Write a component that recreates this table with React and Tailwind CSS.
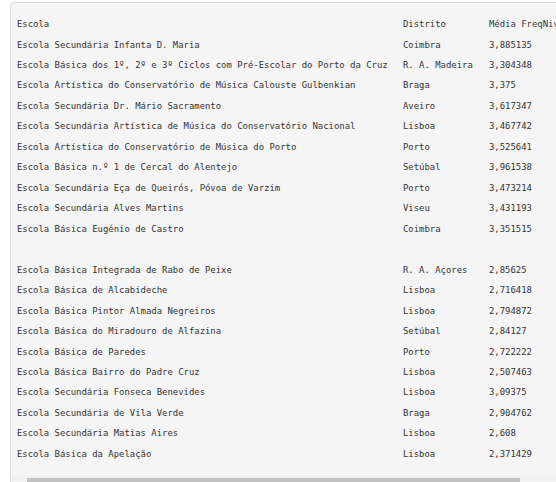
const header = ['Escola', 'Distrito', 'Média FreqNivel'];

const top = [
  ['Escola Secundária Infanta D. Maria', 'Coimbra', '3,885135'],
  ['Escola Básica dos 1º, 2º e 3º Ciclos com Pré-Escolar do Porto da Cruz', 'R. A. Madeira', '3,304348'],
  ['Escola Artística do Conservatório de Música Calouste Gulbenkian', 'Braga', '3,375'],
  ['Escola Secundária Dr. Mário Sacramento', 'Aveiro', '3,617347'],
  ['Escola Secundária Artística de Música do Conservatório Nacional', 'Lisboa', '3,467742'],
  ['Escola Artística do Conservatório de Música do Porto', 'Porto', '3,525641'],
  ['Escola Básica n.º 1 de Cercal do Alentejo', 'Setúbal', '3,961538'],
  ['Escola Secundária Eça de Queirós, Póvoa de Varzim', 'Porto', '3,473214'],
  ['Escola Secundária Alves Martins', 'Viseu', '3,431193'],
  ['Escola Básica Eugénio de Castro', 'Coimbra', '3,351515'],
];

const bottom = [
  ['Escola Básica Integrada de Rabo de Peixe', 'R. A. Açores', '2,85625'],
  ['Escola Básica de Alcabideche', 'Lisboa', '2,716418'],
  ['Escola Básica Pintor Almada Negreiros', 'Lisboa', '2,794872'],
  ['Escola Básica do Miradouro de Alfazina', 'Setúbal', '2,84127'],
  ['Escola Básica de Paredes', 'Porto', '2,722222'],
  ['Escola Básica Bairro do Padre Cruz', 'Lisboa', '2,507463'],
  ['Escola Secundária Fonseca Benevides', 'Lisboa', '3,09375'],
  ['Escola Secundária de Vila Verde', 'Braga', '2,904762'],
  ['Escola Secundária Matias Aires', 'Lisboa', '2,608'],
  ['Escola Básica da Apelação', 'Lisboa', '2,371429'],
];

const Row = ({ cells }) => (
  <div className="grid grid-cols-[386px_86px_120px] h-[20.48px] items-center whitespace-nowrap">
    {cells.map((c, i) => (
      <span key={i}>{c}</span>
    ))}
  </div>
);

const App = () => {
  return (
    <div className="w-[556px] h-[482px] overflow-hidden bg-white">
      <div
        className="ml-[10px] mt-[2px] w-[620px] h-[500px] flex flex-col border border-[#dcdcdc] rounded-[4px] bg-[#f5f5f5] text-[#333] text-[8.93px]"
        style={{ fontFamily: '"DejaVu Sans Mono", "Liberation Mono", monospace' }}
      >
        <div className="pl-[6px] pt-[11.5px] h-[473px]">
          <Row cells={header} />
          {top.map((r, i) => (
            <Row key={i} cells={r} />
          ))}
          <div className="h-[20.48px]" />
          {bottom.map((r, i) => (
            <Row key={i} cells={r} />
          ))}
        </div>
        {/* horizontal scrollbar */}
        <div className="flex h-[17px] bg-[#f1f1f1]">
          <div className="w-[16px] flex items-start justify-center pt-[3px] text-[8px] text-[#a3a3a3]">
            ‹
          </div>
          <div className="w-[493px] h-[12px] mt-[2px] bg-[#c1c1c1]" />
        </div>
      </div>
    </div>
  );
};

export default App;
